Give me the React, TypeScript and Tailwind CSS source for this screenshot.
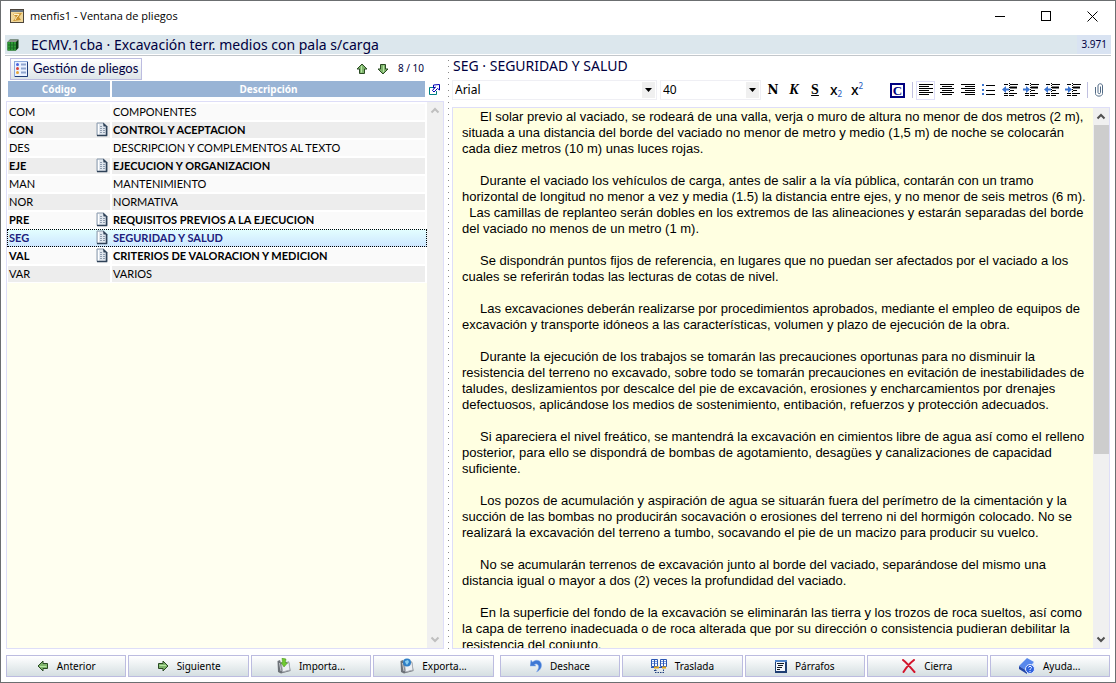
import React, { useState } from 'react';

const rows = [
    { code: 'COM', text: 'COMPONENTES', doc: false },
    { code: 'CON', text: 'CONTROL Y ACEPTACION', doc: true },
    { code: 'DES', text: 'DESCRIPCION Y COMPLEMENTOS AL TEXTO', doc: false },
    { code: 'EJE', text: 'EJECUCION Y ORGANIZACION', doc: true },
    { code: 'MAN', text: 'MANTENIMIENTO', doc: false },
    { code: 'NOR', text: 'NORMATIVA', doc: false },
    { code: 'PRE', text: 'REQUISITOS PREVIOS A LA EJECUCION', doc: true },
    { code: 'SEG', text: 'SEGURIDAD Y SALUD', doc: true },
    { code: 'VAL', text: 'CRITERIOS DE VALORACION Y MEDICION', doc: true },
    { code: 'VAR', text: 'VARIOS', doc: false },
];

const pliego = `     El solar previo al vaciado, se rodeará de una valla, verja o muro de altura no menor de dos metros (2 m),
situada a una distancia del borde del vaciado no menor de metro y medio (1,5 m) de noche se colocarán
cada diez metros (10 m) unas luces rojas.

     Durante el vaciado los vehículos de carga, antes de salir a la vía pública, contarán con un tramo
horizontal de longitud no menor a vez y media (1.5) la distancia entre ejes, y no menor de seis metros (6 m).
  Las camillas de replanteo serán dobles en los extremos de las alineaciones y estarán separadas del borde
del vaciado no menos de un metro (1 m).

     Se dispondrán puntos fijos de referencia, en lugares que no puedan ser afectados por el vaciado a los
cuales se referirán todas las lecturas de cotas de nivel.

     Las excavaciones deberán realizarse por procedimientos aprobados, mediante el empleo de equipos de
excavación y transporte idóneos a las características, volumen y plazo de ejecución de la obra.

     Durante la ejecución de los trabajos se tomarán las precauciones oportunas para no disminuir la
resistencia del terreno no excavado, sobre todo se tomarán precauciones en evitación de inestabilidades de
taludes, deslizamientos por descalce del pie de excavación, erosiones y encharcamientos por drenajes
defectuosos, aplicándose los medios de sostenimiento, entibación, refuerzos y protección adecuados.

     Si apareciera el nivel freático, se mantendrá la excavación en cimientos libre de agua así como el relleno
posterior, para ello se dispondrá de bombas de agotamiento, desagües y canalizaciones de capacidad
suficiente.

     Los pozos de acumulación y aspiración de agua se situarán fuera del perímetro de la cimentación y la
succión de las bombas no producirán socavación o erosiones del terreno ni del hormigón colocado. No se
realizará la excavación del terreno a tumbo, socavando el pie de un macizo para producir su vuelco.

     No se acumularán terrenos de excavación junto al borde del vaciado, separándose del mismo una
distancia igual o mayor a dos (2) veces la profundidad del vaciado.

     En la superficie del fondo de la excavación se eliminarán las tierra y los trozos de roca sueltos, así como
la capa de terreno inadecuada o de roca alterada que por su dirección o consistencia pudieran debilitar la
resistencia del conjunto.`;

const Arrow = ({ turn }: { turn: string }) => (
    <svg className={`w-3 h-3 ${turn}`} viewBox="0 0 12 12">
        <path d="M6 1 L11 6 H8.5 V10.5 H3.5 V6 H1 Z" fill="#7fb56c" stroke="#2b4a24" strokeWidth="1" />
        <path d="M5.5 3 V9.5" stroke="#b9e6a6" strokeWidth="1" />
    </svg>
);

const DocIcon = () => (
    <svg className="w-3 h-[15px] shrink-0" viewBox="0 0 12 15">
        <path d="M1 1 H7.5 L11 4.5 V13.5 H1 Z" fill="#dfe6ee" stroke="#8d9cae" />
        <path d="M2.5 2 V13" stroke="#ffffff" />
        <path d="M10.5 4 V13.5 H1" fill="none" stroke="#2f4258" strokeWidth="1.5" />
        <path d="M7 0.5 L11.5 4.5 H7.5 Z" fill="#2f4258" />
        <path d="M4 4.5 H6 M4 6.5 H9 M4 8.5 H9 M4 10.5 H9" stroke="#8f9db0" strokeDasharray="2 1" />
    </svg>
);

const ListIcon = () => (
    <svg className="w-[14px] h-4" viewBox="0 0 14 16">
        <rect x="0.5" y="0.5" width="13" height="15" fill="#eaf2ff" stroke="#8ca9dc" />
        <path d="M13.5 1 V15.5 H1" fill="none" stroke="#1e3c78" />
        <circle cx="3.5" cy="3.5" r="1.5" fill="#4a63e0" />
        <circle cx="3.5" cy="7.5" r="1.5" fill="#d8433c" />
        <circle cx="3.5" cy="11.5" r="1.5" fill="#e5a53a" />
        <path d="M7 3.5 H12 M7 7.5 H12 M7 11.5 H12" stroke="#8fa6cf" strokeWidth="2" />
    </svg>
);

const ClipIcon = ({ save }: { save: boolean }) => (
    <svg className="w-[14px] h-4" viewBox="0 0 14 16">
        <path d="M0.5 3 L3 2 L4 5 L12 3.5 L13.5 13 L4 15.5 L1 14 Z" fill="#6d7278" />
        <path d="M4.5 6 L12 4.5 L13 12 L5.5 14 Z" fill="#edf0f4" stroke="#a9aeb5" />
        <path d="M2.5 5 L4 13" stroke="#c8cbd0" />
        {save ? (
            <g>
                <circle cx="7" cy="4.5" r="4" fill="#2f7fc7" />
                <path d="M5 3 L8 2 L9 4 L7 7 L5.5 5 Z" fill="#8ed0f0" />
            </g>
        ) : (
            <path d="M5 0 L9 1 L8.5 4.5 L10.5 5 L7 9 L4 4.5 H5.5 Z" fill="#6fca31" stroke="#498f20" strokeWidth="0.5" />
        )}
    </svg>
);

const UndoIcon = () => (
    <svg className="w-3 h-[14px]" viewBox="0 0 12 14">
        <path d="M0 7 L1 1 L2.5 3 C6 0 11 1 11.5 5.5 C12 9 9 12 6.5 13 C8.5 10 9.5 7.5 7.5 5.5 C6.5 4.5 5.5 5 4.5 5.5 L6 7 Z" fill="#3f78d4" stroke="#8bb1ee" strokeWidth="0.5" />
    </svg>
);

const MoveIcon = () => (
    <svg className="w-4 h-[15px]" viewBox="0 0 16 15">
        <path d="M0.5 0.5 H6.5 V7.5 H0.5 Z M9.5 0.5 H15.5 V7.5 H9.5 Z" fill="#f5f9ff" stroke="#2c57b4" />
        <path d="M3.5 1 V7 M12.5 1 V7" stroke="#2c57b4" />
        <path d="M1 2.5 H6 M1 4.5 H6 M10 2.5 H15 M10 4.5 H15" stroke="#7ea0df" strokeDasharray="2 1" />
        <path d="M3 8.5 H8 M11 8.5 H15" stroke="#dfa51a" strokeWidth="2" />
        <path d="M0 8.5 H3 M8 8.5 H11" stroke="#2c57b4" />
        <path d="M4.5 10.5 V14 M4 13.5 H13 M12.5 10.5 V14 M3 11.5 H6" stroke="#21407f" strokeDasharray="1.5 1" />
    </svg>
);

const ParagraphIcon = () => (
    <svg className="w-3 h-[13px]" viewBox="0 0 12 13">
        <rect width="12" height="13" fill="#1f3f73" />
        <rect y="0" width="12" height="2" fill="#4f83c9" />
        <rect x="1" y="2" width="9" height="9" fill="#f3f6fb" />
        <path d="M2 3.5 H9 M3 5.5 H8 M2 7.5 H7 M2 9.5 H5" stroke="#101820" />
    </svg>
);

const CloseIcon = () => (
    <svg className="w-[14px] h-[14px]" viewBox="0 0 14 14">
        <path d="M1 1 C5 4 9 9 12.5 13 M12 1 C8 4 4 9 1.5 13" fill="none" stroke="#d3142c" strokeWidth="2" strokeLinecap="round" />
    </svg>
);

const HelpIcon = () => (
    <svg className="w-4 h-[17px]" viewBox="0 0 16 17">
        <path d="M0 8 L8 0 L15 4 L8 13 Z" fill="#5888ec" />
        <path d="M0 8 L8 13 L8 16 L0 11 Z" fill="#2346a8" />
        <path d="M8 13 L15 4 V7 L8 16 Z" fill="#d6e3fb" />
        <circle cx="11" cy="11" r="4.5" fill="#2f62df" stroke="#e3ecff" />
        <path d="M9.5 9.5 C9.5 8 12.5 8 12.5 9.5 C12.5 10.5 11 10.5 11 12 M11 13 V14" fill="none" stroke="#ffffff" />
    </svg>
);

const actions = [
    { label: 'Anterior', icon: <Arrow turn="-rotate-90" /> },
    { label: 'Siguiente', icon: <Arrow turn="rotate-90" /> },
    { label: 'Importa...', icon: <ClipIcon save={false} /> },
    { label: 'Exporta...', icon: <ClipIcon save={true} /> },
    { label: 'Deshace', icon: <UndoIcon /> },
    { label: 'Traslada', icon: <MoveIcon /> },
    { label: 'Párrafos', icon: <ParagraphIcon /> },
    { label: 'Cierra', icon: <CloseIcon /> },
    { label: 'Ayuda...', icon: <HelpIcon /> },
];

const TitleBar = () => (
    <div className="flex h-[34px] shrink-0 items-center pb-1 pl-[9px] pr-[17px]">
        <svg className="w-[14px] h-[14px]" viewBox="0 0 14 14">
            <rect x="0.5" y="0.5" width="13" height="13" fill="#f0d79a" stroke="#4d463c" />
            <rect x="1" y="1" width="12" height="2" fill="#6b7782" />
            <path d="M3 5 L12 4 L9 8 L11 11 L3 12 L6 8 Z" fill="#c8902c" />
            <path d="M4 5.5 H9 L6.5 8.5 L5 11" fill="none" stroke="#fff3cd" />
        </svg>
        <h1 className="ml-1.5 font-['Open_Sans',sans-serif] text-[11px] leading-4 text-black">menfis1 - Ventana de pliegos</h1>
        <div className="ml-auto flex items-center gap-[35px]">
            <button aria-label="Minimizar">
                <svg className="w-[11px] h-[11px]" viewBox="0 0 11 11"><path d="M0 5.5 H10" stroke="#000" /></svg>
            </button>
            <button aria-label="Maximizar">
                <svg className="w-[11px] h-[11px]" viewBox="0 0 11 11"><rect x="0.5" y="0.5" width="9" height="9" fill="none" stroke="#000" /></svg>
            </button>
            <button aria-label="Cerrar">
                <svg className="w-[11px] h-[11px]" viewBox="0 0 11 11"><path d="M0.5 0.5 L10.5 10.5 M10.5 0.5 L0.5 10.5" stroke="#000" /></svg>
            </button>
        </div>
    </div>
);

const ScrollBar = ({ thumb }: { thumb: boolean }) => (
    <div className={`flex w-4 shrink-0 flex-col bg-[#f0f0f0] ${thumb ? 'text-[#505050]' : 'text-[#bfbfbf]'}`}>
        <svg className="h-[17px] w-4 shrink-0" viewBox="0 0 16 17"><path d="M4.5 10.5 L8 7 L11.5 10.5" fill="none" stroke="currentColor" strokeWidth="2" /></svg>
        <div className="min-h-0 flex-1">
            {thumb ? <div className="mx-auto h-[65%] w-[15px] bg-[#cdcdcd]"></div> : null}
        </div>
        <svg className="h-[17px] w-4 shrink-0" viewBox="0 0 16 17"><path d="M4.5 6.5 L8 10 L11.5 6.5" fill="none" stroke="currentColor" strokeWidth="2" /></svg>
    </div>
);

const PliegoList = () => {
    const [selected, setSelected] = useState('SEG');

    return (
        <section className="flex w-[438px] shrink-0 flex-col">
            <div className="flex h-[25px] shrink-0 items-center pl-1 pr-5">
                <button className="flex h-[22px] items-center gap-[5px] border border-[#bcbce0] bg-linear-to-b from-white to-[#dde5e8] px-[3px] font-['Lato',sans-serif] text-[13px] text-[#000040]">
                    <ListIcon />
                    Gestión de pliegos
                </button>
                <div className="ml-auto flex items-center gap-[9px] text-[10px] text-[#000040]">
                    <button aria-label="Subir"><Arrow turn="rotate-0" /></button>
                    <button aria-label="Bajar"><Arrow turn="rotate-180" /></button>
                    <span>8 / 10</span>
                </div>
            </div>
            <div className="flex h-4 shrink-0 gap-0.5 pl-0.5 text-[10px] leading-4 font-bold text-white">
                <div className="w-[102px] bg-[#99b4d5] text-center">Código</div>
                <div className="flex-1 bg-[#99b4d5] text-center">Descripción</div>
                <button aria-label="Abrir en ventana" className="w-[17px] pl-0.5">
                    <svg className="w-[11px] h-[11px]" viewBox="0 0 11 11">
                        <path d="M4 3.5 H0.5 V10.5 H7.5 V7" fill="none" stroke="#008080" />
                        <path d="M4.5 4 V1 L10.5 0.5 V6 L8.5 4.5 L5 8 L3.5 6.5 L6.5 3 Z" fill="#fff" stroke="#0000b4" />
                    </svg>
                </button>
            </div>
            <div className="mt-1 flex min-h-0 flex-1 border border-[#dedef8] bg-[#fffff0]">
                <div className="min-w-0 flex-1 overflow-hidden">
                    <table aria-label="Pliegos" className="w-full table-fixed border-collapse border-t border-white font-['Lato',sans-serif] text-[11px] leading-4 text-black">
                        <colgroup>
                            <col className="w-[105px]" />
                            <col />
                        </colgroup>
                        <tbody>
                            {rows.map((row, i) => {
                                const active = row.code === selected;
                                const cell = active ? '' : i % 2 ? 'bg-[#ededed]' : 'bg-[#fafafa]';
                                return (
                                    <tr
                                        key={row.code}
                                        onClick={() => setSelected(row.code)}
                                        className={`h-[18px] ${row.doc ? 'font-bold' : ''} ${active ? 'bg-linear-to-b from-[#e4ffff] to-[#cde6ff] text-[#20207c] outline outline-dotted outline-black -outline-offset-1' : 'bg-white'}`}
                                    >
                                        <td className="p-0 pl-px">
                                            <div className={`mr-0.5 flex h-4 items-center justify-between pl-px pr-0.5 ${cell}`}>
                                                {row.code}
                                                {row.doc ? <DocIcon /> : null}
                                            </div>
                                        </td>
                                        <td className="p-0">
                                            <div className={`mr-0.5 h-4 truncate pl-px ${cell}`}>{row.text}</div>
                                        </td>
                                    </tr>
                                );
                            })}
                        </tbody>
                    </table>
                </div>
                <ScrollBar thumb={false} />
            </div>
        </section>
    );
};

const Lines = ({ d, blue }: { d: string; blue?: string }) => (
    <svg className="w-4 h-[14px]" viewBox="0 0 16 14">
        <path d={d} stroke="#000" fill="none" />
        {blue ? <path d={blue} fill="#3b74d0" /> : null}
    </svg>
);

const Indent = ({ blue }: { blue: string }) => (
    <svg className="w-4 h-[14px]" viewBox="0 0 16 14">
        <path d="M2 1.5 H6 M8 1.5 H16 M2 10.5 H6 M8 10.5 H15 M2 12.5 H6 M8 12.5 H12 M8 7.5 H12" stroke="#000" />
        <path d="M8 4.5 H15" stroke="#000" strokeWidth="2" />
        <path d="M7.5 0 V14" stroke="#000" strokeDasharray="1 1" />
        <path d={blue} fill="#3b74d0" />
    </svg>
);

const arrowOut = 'M0 6.5 L4 3 V5.5 H7 V7.5 H4 V10 Z';
const arrowIn = 'M7 6.5 L3 3 V5.5 H0 V7.5 H3 V10 Z';

const Combo = ({ label, value, width }: { label: string; value: string; width: string }) => (
    <div className={`relative h-5 border border-[#efeff4] ${width}`}>
        <select aria-label={label} className="block h-full w-full appearance-none bg-white pl-0.5 text-[12px] leading-[18px] text-black outline-none">
            <option>{value}</option>
        </select>
        <span className="pointer-events-none absolute inset-y-px right-px flex w-[13px] items-center justify-center bg-[#f0f0f0]">
            <svg className="w-[7px] h-1" viewBox="0 0 7 4"><path d="M0 0 H7 L3.5 4 Z" fill="#000" /></svg>
        </span>
    </div>
);

const Toolbar = () => (
    <div className="flex h-5 shrink-0 items-center">
        <Combo label="Fuente" value="Arial" width="w-[205px]" />
        <Combo label="Tamaño" value="40" width="ml-[3px] w-[101px]" />
        <div className="ml-1 flex gap-[5px] font-['Liberation_Serif',serif] text-[14px] leading-5 text-black">
            <button aria-label="Negrita" className="w-4 font-['DejaVu_Serif',serif] text-[12px] font-bold">N</button>
            <button aria-label="Cursiva" className="w-4 font-bold italic">K</button>
            <button aria-label="Subrayado" className="w-4 font-bold underline">S</button>
            <button aria-label="Subíndice" className="flex w-4 items-center justify-center font-['Noto_Sans',sans-serif] font-medium">
                x<span className="mt-2 text-[8px] text-[#2f63c0]">2</span>
            </button>
            <button aria-label="Superíndice" className="flex w-4 items-center justify-center font-['Noto_Sans',sans-serif] font-medium">
                x<span className="mb-2 text-[8px] text-[#2f63c0]">2</span>
            </button>
        </div>
        <div className="ml-auto flex items-center">
            <button aria-label="Color" className="mr-[7px] h-[15px] w-[15px] border-2 border-[#000080] font-['Liberation_Serif',serif] text-[13px] leading-[11px] font-bold text-[#000080]">C</button>
            <span className="mr-[3px] h-4 w-px bg-[#c0c0e0]"></span>
            <div className="flex items-center gap-[5px]">
                <button aria-label="Alinear a la izquierda" className="-mr-px flex h-[19px] w-[19px] items-center justify-center border border-[#dedef8]"><Lines d="M1 1.5 H15 M1 3.5 H11 M1 5.5 H15 M1 7.5 H11 M1 9.5 H15 M1 11.5 H11" /></button>
                <button aria-label="Centrar"><Lines d="M1 1.5 H15 M3 3.5 H13 M1 5.5 H15 M3 7.5 H13 M1 9.5 H15 M3 11.5 H13" /></button>
                <button aria-label="Alinear a la derecha"><Lines d="M1 1.5 H15 M5 3.5 H15 M1 5.5 H15 M5 7.5 H15 M1 9.5 H15 M5 11.5 H15" /></button>
                <button aria-label="Viñetas"><Lines d="M5 2.5 H14 M5 7.5 H14 M5 11.5 H14" blue="M1 1 H3 V3 H1 Z M1 6 H3 V8 H1 Z M1 10 H3 V12 H1 Z" /></button>
                <button aria-label="Reducir sangría"><Indent blue={arrowOut} /></button>
                <button aria-label="Aumentar sangría"><Indent blue={arrowIn} /></button>
                <button aria-label="Reducir primera línea"><Indent blue={arrowOut} /></button>
                <button aria-label="Aumentar primera línea"><Indent blue={arrowIn} /></button>
            </div>
            <span className="ml-1.5 mr-[7px] h-4 w-px bg-[#c0c0e0]"></span>
            <button aria-label="Adjuntar" className="mr-[7px]">
                <svg className="w-2 h-[14px]" viewBox="0 0 8 14">
                    <path d="M5.5 3.5 V9.5 C5.5 11 3 11 3 9.5 V3 C3 0 7.5 0 7.5 3 V10.5 C7.5 14 0.5 14 0.5 10.5 V4" fill="none" stroke="#526b86" />
                </svg>
            </button>
        </div>
    </div>
);

const Editor = () => (
    <section className="flex min-w-0 flex-1 flex-col">
        <h2 className="h-6 shrink-0 pl-px text-[14px] leading-5 text-[#000040]">SEG · SEGURIDAD Y SALUD</h2>
        <Toolbar />
        <div className="mt-[7px] flex min-h-0 flex-1 border border-[#dedef8] bg-[#ffffe1]">
            <textarea
                aria-label="Texto del pliego"
                defaultValue={pliego}
                spellCheck={false}
                className="min-w-0 flex-1 resize-none overflow-hidden whitespace-pre pl-[9px] pt-px font-['Liberation_Sans',Arial,sans-serif] text-[13px] leading-4 text-black outline-none"
            />
            <ScrollBar thumb={true} />
        </div>
    </section>
);

export default function App() {
    return (
        <div className="flex h-screen flex-col border border-[#6b6e70] bg-white font-['Noto_Sans',sans-serif]">
            <TitleBar />
            <div className="mx-1 flex h-[19px] shrink-0 items-center bg-[#dce7ed] pl-0.5 text-[#000040]">
                <svg className="w-3 h-3" viewBox="0 0 12 12">
                    <path d="M0.5 3 L3 0.5 H11.5 V9 L9 11.5 H0.5 Z" fill="#0c3a12" />
                    <path d="M3 0.5 H11.5 L9 3 H0.5 Z" fill="#8c958e" />
                    <path d="M0.5 3 H9 V11.5 H0.5 Z" fill="#2e9a34" />
                    <path d="M3.5 3 V11 M6.5 3 V11 M1 6 H9 M1 9 H9" stroke="#1a6b24" />
                </svg>
                <h2 className="ml-3 text-[14px] leading-[19px]">ECMV.1cba · Excavación terr. medios con pala s/carga</h2>
                <span className="ml-auto bg-[#d9e3f2] px-1 text-[10px] leading-[19px]">3.971</span>
            </div>
            <div className="mx-1 mt-px h-px shrink-0 bg-[#c3c7cb]"></div>
            <main className="mx-[5px] flex min-h-0 flex-1">
                <PliegoList />
                <div className="mt-1 mr-[3px] ml-1 w-px shrink-0 bg-[repeating-linear-gradient(#8a8a8a_0_1px,transparent_1px_6px)]"></div>
                <Editor />
            </main>
            <footer className="mx-[5px] mt-1.5 mb-[5px] flex h-[22px] shrink-0 gap-0.5">
                {actions.map((action) => (
                    <button
                        key={action.label}
                        className="flex min-w-0 flex-1 items-center justify-center gap-2 border border-[#bcbce0] bg-linear-to-b from-white to-[#d5dfe2] text-[10px] text-black nth-[5]:ml-1"
                    >
                        {action.icon}
                        {action.label}
                    </button>
                ))}
            </footer>
        </div>
    );
}
